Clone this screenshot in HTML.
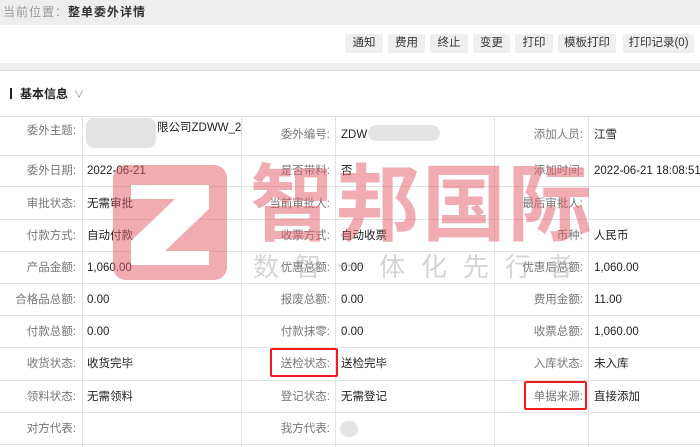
<!DOCTYPE html>
<html><head><meta charset="utf-8"><style>
*{margin:0;padding:0;box-sizing:border-box}
body{width:700px;height:447px;overflow:hidden;background:#fff;font-family:"Liberation Sans","Noto Sans CJK SC",sans-serif;font-size:12px;color:#222;position:relative}
.top{position:absolute;left:0;top:0;width:700px;height:25px;background:#eeeeee}
.top span{position:absolute;left:3px;top:4px;font-size:12px;line-height:16px;color:#999;letter-spacing:1px}
.top b{color:#333}
.band{position:absolute;left:0;top:63px;width:700px;height:8px;background:#eeeeee;border-bottom:1px solid #ddd}
.btn{position:absolute;top:34px;height:19px;background:#efefef;border-radius:2px;font-size:11.5px;color:#333;text-align:center;line-height:19px}
.sec{position:absolute;left:10px;top:86px;font-size:12px;line-height:16px;font-weight:bold;color:#222}
.sec i{display:inline-block;width:2px;height:11px;background:#222;vertical-align:-1px;margin-right:8px}
.sec em{font-style:normal;font-weight:normal;color:#888;margin-left:6px;font-size:10px}
.h{position:absolute;left:0;width:700px;height:1px;background:#e2e2e2}
.v{position:absolute;width:1px;background:#e2e2e2}
.l,.t{position:absolute;font-size:11.5px;line-height:16px;height:16px;white-space:nowrap}
.l{text-align:right;color:#777}
.t{color:#222}
.rb{position:absolute;border:2px solid #f21c1c;border-radius:2px}
.wm{position:absolute;left:113px;top:165px;width:114px;height:115px;background:rgba(225,90,100,.5);border-radius:13px}
.wt{position:absolute;left:250px;top:150px;font-size:84px;font-weight:bold;color:rgba(225,90,100,.5);letter-spacing:2px;line-height:110px;white-space:nowrap}
.ws{position:absolute;left:253px;top:250px;font-size:26px;line-height:34px;color:rgba(160,160,160,.45);letter-spacing:16px;white-space:nowrap}
.blur{position:absolute;background:#ddd;border-radius:8px;opacity:.8}
</style></head><body>
<div class="top"><span>当前位置：<b>整单委外详情</b></span></div>
<div class="btn" style="left:345px;width:38px">通知</div>
<div class="btn" style="left:388px;width:37px">费用</div>
<div class="btn" style="left:430px;width:38px">终止</div>
<div class="btn" style="left:473px;width:37px">变更</div>
<div class="btn" style="left:515px;width:38px">打印</div>
<div class="btn" style="left:558px;width:58px">模板打印</div>
<div class="btn" style="left:623px;width:71px">打印记录(0)</div>
<div class="band"></div>
<div class="sec"><i></i>基本信息<em>∨</em></div>

<div class="h" style="top:116px"></div><div class="h" style="top:155px"></div><div class="h" style="top:186px"></div><div class="h" style="top:219px"></div><div class="h" style="top:251px"></div><div class="h" style="top:283px"></div><div class="h" style="top:315px"></div><div class="h" style="top:347px"></div><div class="h" style="top:380px"></div><div class="h" style="top:412px"></div><div class="h" style="top:444px"></div>
<div class="v" style="left:82px;top:116px;height:331px"></div>
<div class="v" style="left:241px;top:116px;height:331px"></div>
<div class="v" style="left:335px;top:116px;height:331px"></div>
<div class="v" style="left:494px;top:116px;height:331px"></div>
<div class="v" style="left:588px;top:116px;height:331px"></div>

<div class="blur" style="left:86px;top:118px;width:70px;height:30px"></div>
<div class="blur" style="left:368px;top:125px;width:72px;height:16px"></div>
<div class="blur" style="left:340px;top:421px;width:18px;height:16px"></div>

<div class="l" style="left:0;width:76px;top:123px">委外主题:</div><div class="t" style="left:157px;top:120px">限公司ZDWW_2</div>
<div class="l" style="left:241px;width:89px;top:127px">委外编号:</div><div class="t" style="left:341px;top:127px">ZDW</div>
<div class="l" style="left:494px;width:89px;top:127px">添加人员:</div><div class="t" style="left:594px;top:127px">江雪</div>

<div class="l" style="left:0;width:76px;top:163px">委外日期:</div><div class="t" style="left:87px;top:163px">2022-06-21</div>
<div class="l" style="left:241px;width:89px;top:163px">是否带料:</div><div class="t" style="left:341px;top:163px">否</div>
<div class="l" style="left:494px;width:89px;top:163px">添加时间:</div><div class="t" style="left:594px;top:163px">2022-06-21 18:08:51</div>

<div class="l" style="left:0;width:76px;top:196px">审批状态:</div><div class="t" style="left:87px;top:196px">无需审批</div>
<div class="l" style="left:241px;width:89px;top:196px">当前审批人:</div>
<div class="l" style="left:494px;width:89px;top:196px">最后审批人:</div>

<div class="l" style="left:0;width:76px;top:228px">付款方式:</div><div class="t" style="left:87px;top:228px">自动付款</div>
<div class="l" style="left:241px;width:89px;top:228px">收票方式:</div><div class="t" style="left:341px;top:228px">自动收票</div>
<div class="l" style="left:494px;width:89px;top:228px">币种:</div><div class="t" style="left:594px;top:228px">人民币</div>

<div class="l" style="left:0;width:76px;top:260px">产品金额:</div><div class="t" style="left:87px;top:260px">1,060.00</div>
<div class="l" style="left:241px;width:89px;top:260px">优惠总额:</div><div class="t" style="left:341px;top:260px">0.00</div>
<div class="l" style="left:494px;width:89px;top:260px">优惠后总额:</div><div class="t" style="left:594px;top:260px">1,060.00</div>

<div class="l" style="left:0;width:76px;top:292px">合格品总额:</div><div class="t" style="left:87px;top:292px">0.00</div>
<div class="l" style="left:241px;width:89px;top:292px">报废总额:</div><div class="t" style="left:341px;top:292px">0.00</div>
<div class="l" style="left:494px;width:89px;top:292px">费用金额:</div><div class="t" style="left:594px;top:292px">11.00</div>

<div class="l" style="left:0;width:76px;top:324px">付款总额:</div><div class="t" style="left:87px;top:324px">0.00</div>
<div class="l" style="left:241px;width:89px;top:324px">付款抹零:</div><div class="t" style="left:341px;top:324px">0.00</div>
<div class="l" style="left:494px;width:89px;top:324px">收票总额:</div><div class="t" style="left:594px;top:324px">1,060.00</div>

<div class="l" style="left:0;width:76px;top:356px">收货状态:</div><div class="t" style="left:87px;top:356px">收货完毕</div>
<div class="l" style="left:241px;width:89px;top:356px">送检状态:</div><div class="t" style="left:341px;top:356px">送检完毕</div>
<div class="l" style="left:494px;width:89px;top:356px">入库状态:</div><div class="t" style="left:594px;top:356px">未入库</div>

<div class="l" style="left:0;width:76px;top:389px">领料状态:</div><div class="t" style="left:87px;top:389px">无需领料</div>
<div class="l" style="left:241px;width:89px;top:389px">登记状态:</div><div class="t" style="left:341px;top:389px">无需登记</div>
<div class="l" style="left:494px;width:89px;top:389px">单据来源:</div><div class="t" style="left:594px;top:389px">直接添加</div>

<div class="l" style="left:0;width:76px;top:421px">对方代表:</div>
<div class="l" style="left:241px;width:89px;top:421px">我方代表:</div>

<div class="rb" style="left:270px;top:348px;width:68px;height:29px"></div>
<div class="rb" style="left:524px;top:381px;width:63px;height:29px"></div>

<div class="wm"><svg width="114" height="115" viewBox="0 0 114 115"><path d="M18 20H96V44L52 86H96V100H18V76L62 34H18Z" fill="#fff"/></svg></div>
<div class="wt">智邦国际</div>
<div class="ws">数智一体化先行者</div>
</body></html>
